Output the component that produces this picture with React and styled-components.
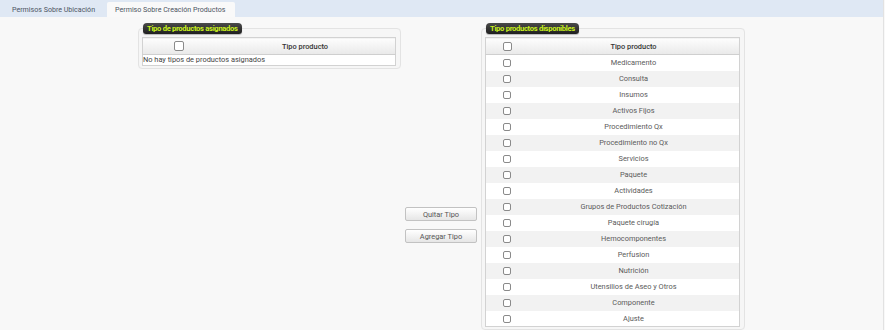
import React from 'react';
import styled, { createGlobalStyle } from 'styled-components';

const GlobalStyle = createGlobalStyle`
  html, body { margin: 0; padding: 0; background: #f8f8f8; }
  body { font-family: Roboto, "Liberation Sans", sans-serif; color: #555; }
`

const Page = styled.div`
  width: 883px;
  min-height: 330px;
  border-right: 1px solid #e2e2e2;
  background: #f8f8f8;
`
const TabBar = styled.div`
  height: 17px;
  background: #dfe8f4;
  display: flex;
  align-items: flex-end;
  padding-left: 4px;
  gap: 2px;
`
const Tab = styled.div`
  height: 15px;
  padding: 0 10px 0 8px;
  display: flex;
  align-items: center;
  font-size: 7.1px;
  color: #4c5563;
  background: ${p => (p.$active ? '#f9f9f9' : 'transparent')};
  border-radius: 2px 2px 0 0;
`
const Content = styled.div`
  display: flex;
  justify-content: center;
  align-items: flex-start;
  gap: 4px;
  padding-top: 6px;
`
const Group = styled.fieldset`
  margin: 0;
  padding: 3px 4px 2px 3px;
  border: 1px solid #e3e3e3;
  border-radius: 4px;
  background: #f6f6f6;
  width: ${p => p.$w}px;
  box-sizing: border-box;
`
const Legend = styled.legend`
  margin: 0 0 0 1px;
  padding: 0 4px;
  height: 11px;
  line-height: 11px;
  font-size: 7.6px;
  font-weight: 700;
  letter-spacing: -0.3px;
  color: #c9f21c;
  background: linear-gradient(#4a4a4a, #1f1f1f);
  border-radius: 4px 4px 3px 3px;
  box-shadow: 0 1px 1px rgba(0, 0, 0, 0.25);
`
const Table = styled.table`
  width: 100%;
  border-collapse: collapse;
  border: 1px solid #d2d2d2;
  background: #fff;
  font-size: 7.4px;
`
const Head = styled.th`
  height: 16px;
  padding: 0;
  font-weight: 500;
  color: #333;
  background: linear-gradient(#fdfdfd, #e9e9e9);
  border-bottom: 1px solid #cfcfcf;
  width: ${p => (p.$w ? `${p.$w}px` : 'auto')};
  text-align: center;
`
const Row = styled.tr`
  height: 16px;
  background: ${p => (p.$odd ? '#f2f2f2' : '#fff')};
`
const Cell = styled.td`
  padding: 0;
  text-align: center;
  color: #5a5a5a;
`
const EmptyCell = styled.td`
  padding: 0;
  height: 10px;
  line-height: 10px;
  text-align: left;
  color: #444;
`
const Box = styled.span`
  display: inline-block;
  vertical-align: middle;
  width: ${p => p.$size}px;
  height: ${p => p.$size}px;
  box-sizing: border-box;
  border: 1px solid #8a8a8a;
  border-radius: 2px;
  background: #fff;
`
const Actions = styled.div`
  width: 72px;
  padding-top: 184px;
  display: flex;
  flex-direction: column;
  gap: 8px;
`
const Button = styled.button`
  width: 72px;
  height: 14px;
  padding: 0;
  font-family: Roboto, "Liberation Sans", sans-serif;
  font-size: 7.4px;
  color: #555;
  border: 1px solid #c2c2c2;
  border-radius: 2px;
  background: linear-gradient(#ffffff, #e6e6e6);
`

const tipos = [
  'Medicamento', 'Consulta', 'Insumos', 'Activos Fijos', 'Procedimiento Qx',
  'Procedimiento no Qx', 'Servicios', 'Paquete', 'Actividades',
  'Grupos de Productos Cotización', 'Paquete cirugía', 'Hemocomponentes',
  'Perfusion', 'Nutrición', 'Utensilios de Aseo y Otros', 'Componente', 'Ajuste',
]

const App = () => {
  return (
    <Page>
      <GlobalStyle />
      <TabBar>
        <Tab>Permisos Sobre Ubicación</Tab>
        <Tab $active>Permiso Sobre Creación Productos</Tab>
      </TabBar>
      <Content>
        <Group $w={263}>
          <Legend>Tipo de productos asignados</Legend>
          <Table>
            <thead>
              <tr>
                <Head $w={72}><Box $size={10} /></Head>
                <Head>Tipo producto</Head>
              </tr>
            </thead>
            <tbody>
              <tr>
                <EmptyCell colSpan={2}>No hay tipos de productos asignados</EmptyCell>
              </tr>
            </tbody>
          </Table>
        </Group>
        <Actions>
          <Button>Quitar Tipo</Button>
          <Button>Agregar Tipo</Button>
        </Actions>
        <Group $w={264}>
          <Legend>Tipo productos disponibles</Legend>
          <Table>
            <thead>
              <tr>
                <Head $w={42}><Box $size={9} /></Head>
                <Head>Tipo producto</Head>
              </tr>
            </thead>
            <tbody>
              {tipos.map((t, i) => (
                <Row key={t} $odd={i % 2 === 1}>
                  <Cell><Box $size={8} /></Cell>
                  <Cell>{t}</Cell>
                </Row>
              ))}
            </tbody>
          </Table>
        </Group>
      </Content>
    </Page>
  )
}

export default App;
